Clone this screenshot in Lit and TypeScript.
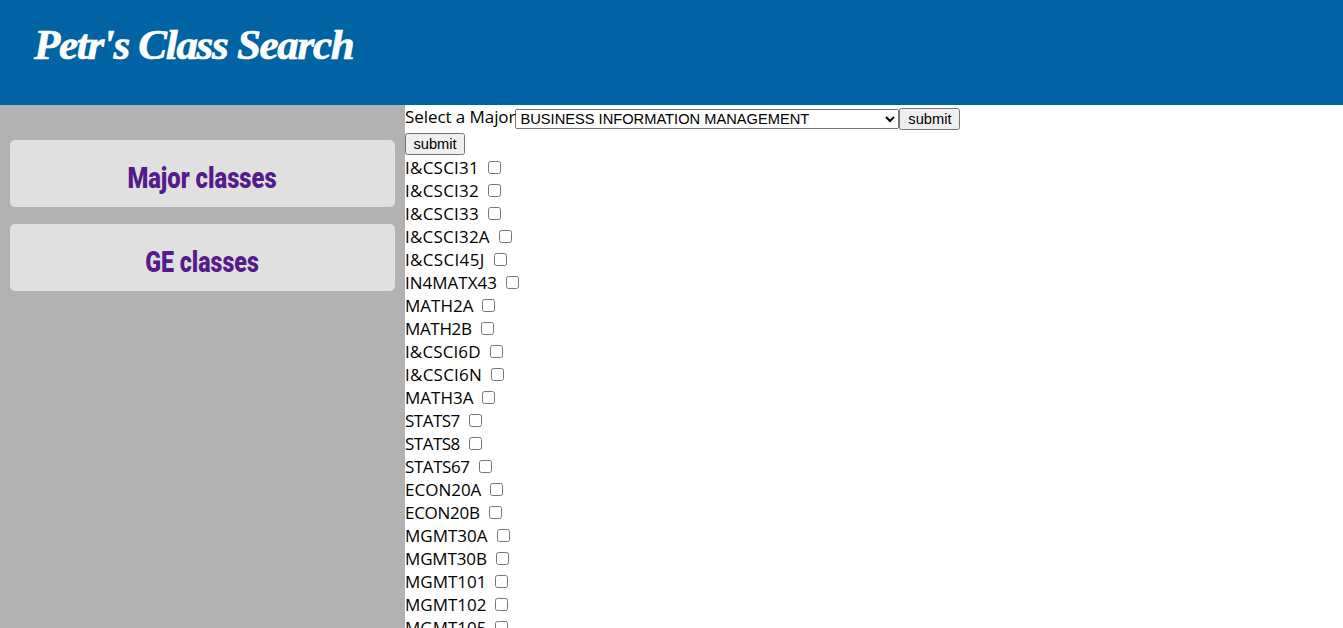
import { LitElement, html, css } from "lit";
import { customElement } from "lit/decorators.js";

// name, then how far the label's width differs from the plain font's (px)
const CLASSES: [string, number][] = [
  ["I&CSCI31", 2], ["I&CSCI32", 2], ["I&CSCI33", 2], ["I&CSCI32A", 2], ["I&CSCI45J", 3], ["IN4MATX43", 0],
  ["MATH2A", 0], ["MATH2B", -2], ["I&CSCI6D", 1], ["I&CSCI6N", 2], ["MATH3A", 0], ["STATS7", -3],
  ["STATS8", -3], ["STATS67", -3], ["ECON20A", 0], ["ECON20B", -2], ["MGMT30A", 0], ["MGMT30B", -1],
  ["MGMT101", 0], ["MGMT102", 0], ["MGMT105", 0],
];

@customElement("app-root")
export class AppRoot extends LitElement {
  static styles = css`
    :host { display: block; height: 628px; overflow: hidden; background: #fff; color: #000; font-family: "Open Sans", sans-serif; font-size: 17px; }
    .header { height: 105px; background: #0064a4; box-sizing: border-box; padding: 21px 0 0 34px; }
    .title { margin: 0; color: #fff; font: italic bold 43px/48px "Liberation Serif", serif; letter-spacing: -1.3px; -webkit-text-stroke: 0.7px #fff; }
    .body { display: flex; height: 523px; }
    .side { width: 405px; flex: none; background: #b2b2b2; box-sizing: border-box; padding: 35px 10px 0; display: flex; flex-direction: column; gap: 17px; }
    .card { height: 67px; box-sizing: border-box; padding-top: 20px; background: #e0e0e0; border-radius: 5px; text-align: center; color: #551a8b; font: 900 29px/36px "Roboto", sans-serif; text-decoration: none; }
    .card span { display: inline-block; transform: scaleX(0.8); }
    .card:first-child span { transform: scaleX(0.82); }
    .main { flex: 1; min-width: 0; }
    .row1 { display: flex; align-items: center; height: 26px; padding-top: 1px; box-sizing: border-box; }
    .row1 .lbl { letter-spacing: -0.07px; position: relative; top: -2px; }
    .row2 { height: 26px; display: flex; align-items: center; }
    select { width: 384px; height: 20px; font: 14.67px "Liberation Sans", sans-serif; box-sizing: border-box; margin: 0; }
    button { width: 60px; height: 22px; padding: 0; font: 14.67px "Liberation Sans", sans-serif; box-sizing: border-box; margin: 0; }
    .row1 button { width: 61px; }
    .row { height: 23px; line-height: 21px; display: flex; align-items: center; }
    .row span { position: relative; top: -1px; }
    .row input { margin: 0 0 2px 9px; width: 13px; height: 13px; }
  `;
  render() {
    return html`
      <div class="header"><h1 class="title">Petr's Class Search</h1></div>
      <div class="body">
        <nav class="side">
          <a class="card" href="#"><span>Major classes</span></a>
          <a class="card" href="#"><span>GE classes</span></a>
        </nav>
        <main class="main">
          <div class="row1">
            <span class="lbl">Select a Major</span>
            <select><option>BUSINESS INFORMATION MANAGEMENT</option></select>
            <button>submit</button>
          </div>
          <div class="row2"><button>submit</button></div>
          ${CLASSES.map(([c, d]) => html`<div class="row"><span style="letter-spacing:${d / c.length}px">${c}</span><input type="checkbox" /></div>`)}
        </main>
      </div>
    `;
  }
}
